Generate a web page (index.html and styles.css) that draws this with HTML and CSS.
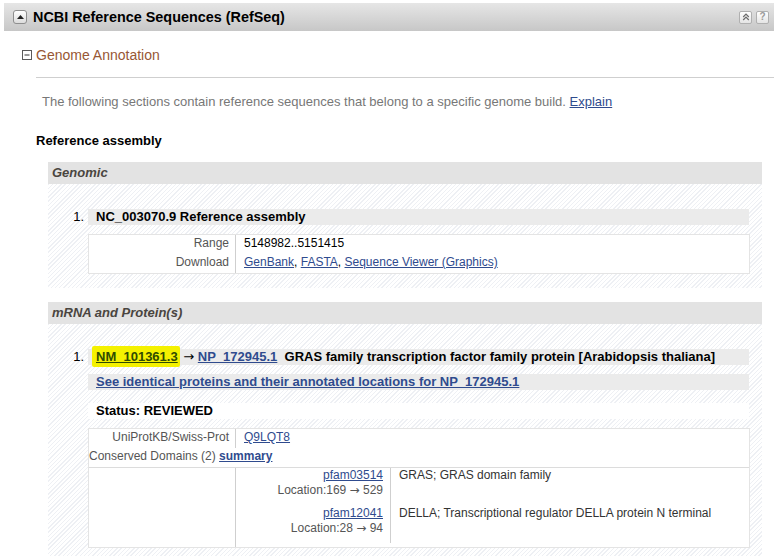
FILE: index.html
```html
<!DOCTYPE html>
<html lang="en">
<head>
<meta charset="utf-8">
<title>NCBI Reference Sequences (RefSeq)</title>
<link rel="stylesheet" href="styles.css">
</head>
<body>
<div class="panel-head">
  <span class="btn-toggle"><svg width="7" height="4" viewBox="0 0 7 4"><path d="M0 4 L3.5 0 L7 4Z" fill="#222"/></svg></span>
  <h2 class="panel-title">NCBI Reference Sequences (RefSeq)</h2>
  <span class="head-tools">
    <span class="tool"><svg width="8" height="8" viewBox="0 0 8 8"><path d="M1.2 4 L4 1.2 L6.8 4 M1.2 7 L4 4.2 L6.8 7" fill="none" stroke="#6a6a6a" stroke-width="1.2"/></svg></span>
    <span class="tool tool-help">?</span>
  </span>
</div>

<div class="sec-head">
  <svg class="minus" width="10" height="10" viewBox="0 0 10 10"><rect x="0.5" y="0.5" width="9" height="9" fill="#fff" stroke="#5a5a5a"/><path d="M2.5 5 H7.5" stroke="#333"/></svg>
  <span>Genome Annotation</span>
</div>

<div class="sec-body">
  <p class="desc">The following sections contain reference sequences that belong to a specific genome build. <a href="#">Explain</a></p>
  <h3 class="sub">Reference assembly</h3>

  <div class="group">
    <div class="group-head">Genomic</div>
    <div class="group-body">
      <div class="item">
        <span class="num">1.</span>
        <div class="item-main">
          <div class="bar"><b>NC_003070.9 Reference assembly</b></div>
          <div class="dtable">
            <div class="drow"><div class="dlabel">Range</div><div class="dval">5148982..5151415</div></div>
            <div class="drow"><div class="dlabel">Download</div><div class="dval"><a href="#">GenBank</a>, <a href="#">FASTA</a>, <a href="#">Sequence Viewer (Graphics)</a></div></div>
          </div>
        </div>
      </div>
    </div>
  </div>

  <div class="group">
    <div class="group-head">mRNA and Protein(s)</div>
    <div class="group-body">
      <div class="item">
        <span class="num">1.</span>
        <div class="item-main">
          <div class="bar"><b><a href="#" class="hl">NM_101361.3</a> <span class="arrow">→</span> <a href="#">NP_172945.1</a>&nbsp; GRAS family transcription factor family protein [Arabidopsis thaliana]</b></div>
          <div class="bar bar-link"><a href="#"><b>See identical proteins and their annotated locations for NP_172945.1</b></a></div>
          <div class="bar bar-white"><b>Status: REVIEWED</b></div>
          <div class="dtable">
            <div class="drow"><div class="dlabel">UniProtKB/Swiss-Prot</div><div class="dval"><a href="#">Q9LQT8</a></div></div>
            <div class="dfull">Conserved Domains (2) <a href="#"><b>summary</b></a></div>
            <div class="drow drow-dom">
              <div class="dlabel"></div>
              <div class="dom-wrap">
                <div class="dom">
                  <div class="dom-id"><a href="#">pfam03514</a><br>Location:169 <span class="arrow">→</span> 529</div>
                  <div class="dom-desc">GRAS; GRAS domain family</div>
                </div>
                <div class="dom">
                  <div class="dom-id"><a href="#">pfam12041</a><br>Location:28 <span class="arrow">→</span> 94</div>
                  <div class="dom-desc">DELLA; Transcriptional regulator DELLA protein N terminal</div>
                </div>
              </div>
            </div>
          </div>
        </div>
      </div>
    </div>
  </div>
</div>
</body>
</html>
```

FILE: styles.css
```css
* { box-sizing: border-box; }
html { overflow: hidden; }
body {
  margin: 0;
  background: #fff;
  font-family: "Liberation Sans", Arial, sans-serif;
  font-size: 13px;
  color: #000;
}
a { color: #2f4b8e; }
.arrow { font-family: "DejaVu Sans", sans-serif; font-weight: normal; }

/* panel header */
.panel-head {
  margin: 3px 0 0 4px;
  height: 28px;
  display: flex;
  align-items: center;
  padding: 0 5px 0 9px;
  background: linear-gradient(#e6e6e6, #c7c7c7);
}
.btn-toggle {
  width: 14px;
  height: 14px;
  border: 1px solid #8e8e8e;
  border-radius: 3px;
  background: linear-gradient(#ffffff, #dcdcdc);
  display: flex;
  align-items: center;
  justify-content: center;
}
.panel-title {
  margin: 0 0 0 6px;
  flex: 1;
  font-size: 14.4px;
  font-weight: bold;
  line-height: 18px;
}
.head-tools { display: flex; gap: 4px; }
.tool {
  width: 13px;
  height: 13px;
  border: 1px solid #b0b0b0;
  border-radius: 2px;
  background: linear-gradient(#ffffff, #e4e4e4);
  display: flex;
  align-items: center;
  justify-content: center;
}
.tool-help {
  font-size: 10px;
  font-weight: bold;
  color: #9a9a9a;
  line-height: 1;
}

/* section */
.sec-head {
  margin: 16px 0 0 22px;
  height: 16px;
  display: flex;
  align-items: center;
  gap: 4px;
  font-size: 14px;
  color: #985735;
}
.sec-body {
  margin: 14px 0 0 36px;
  border-top: 1px solid #cfcfcf;
}
.desc {
  margin: 16px 0 0 6px;
  line-height: 16px;
  color: #777;
}
.sub {
  margin: 23px 0 0;
  font-size: 13px;
  line-height: 16px;
}

/* groups */
.group { margin: 13px 12px 0 12px; }
.group + .group { margin-top: 14px; }
.group-head {
  height: 22px;
  line-height: 22px;
  padding-left: 4px;
  background: #e3e3e3;
  font-weight: bold;
  font-style: italic;
  color: #4a4540;
}
.group-body {
  padding: 25px 12px 14px 0;
  background: repeating-linear-gradient(135deg, #eef0f4 0 1px, #ffffff 1px 3px);
}
.item {
  display: grid;
  grid-template-columns: 40px 1fr;
}
.num {
  text-align: right;
  padding-right: 4px;
  line-height: 16px;
}
.item-main { display: flex; flex-direction: column; }

.bar {
  height: 16px;
  line-height: 16px;
  padding-left: 8px;
  margin-right: 1px;
  background: #ebebeb;
  white-space: nowrap;
}
.bar-link { margin-top: 9px; }
.bar-white { margin-top: 13px; background: #fff; }

.hl {
  background: #f4f100;
  color: #2f4b00;
  padding: 3px 2px 3px 4px;
  margin-left: -4px;
  border-radius: 2px;
}

/* data tables */
.dtable {
  margin-top: 9px;
  border: 1px solid #e4e4e4;
  background: #fff;
  font-size: 12px;
  line-height: 16px;
}
.drow {
  display: grid;
  grid-template-columns: 147px 1fr;
}
.dlabel {
  text-align: right;
  padding: 0 6px 3px 0;
  border-right: 1px solid #cfcfcf;
  color: #555;
}
.dval { padding: 0 0 3px 8px; }
.dfull {
  padding: 0 0 3px 0;
  color: #555;
  border-bottom: 1px solid #dcdcdc;
}
.dom-wrap { padding-bottom: 4px; }
.dom {
  display: grid;
  grid-template-columns: 155px 1fr;
  line-height: 15px;
}
.dom-id {
  text-align: right;
  padding: 0 7px 8px 0;
  border-right: 1px solid #cfcfcf;
  color: #555;
}
.dom:last-child .dom-id { padding-bottom: 7px; }
.dom-desc { padding-left: 8px; color: #333; }
```
